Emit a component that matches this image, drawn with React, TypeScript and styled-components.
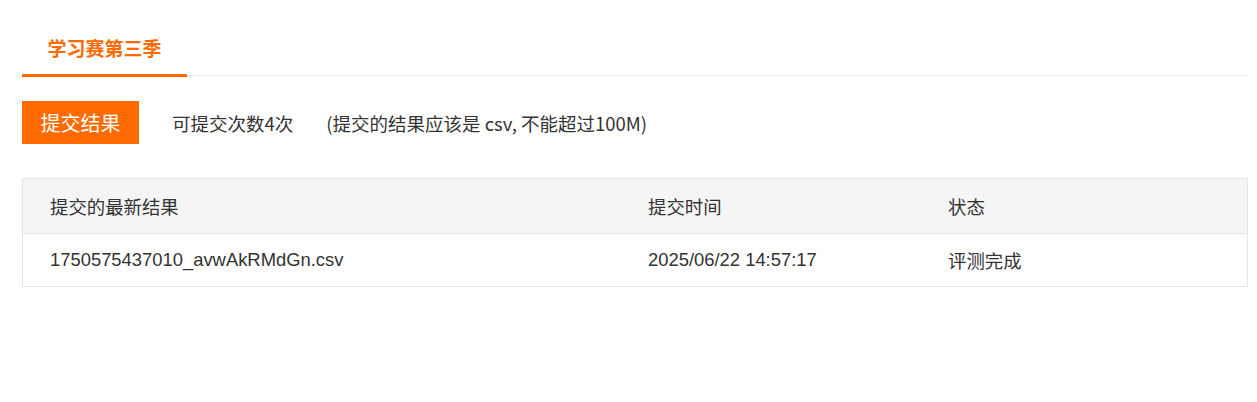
import React from "react";
import styled, { createGlobalStyle } from "styled-components";

const GlobalStyle = createGlobalStyle`
  html, body { margin: 0; padding: 0; background: #fff; }
  body { font-family: "Noto Sans CJK SC", "Noto Sans", sans-serif; color: #333; }
`;

const Page = styled.div`
  padding: 20px 9px 0 22px;
`;

const TabBar = styled.div`
  display: flex;
  border-bottom: 1px solid #eeeeee;
`;

const Tab = styled.div<{ $active?: boolean }>`
  height: 54px;
  width: 165px;
  display: flex;
  align-items: center;
  justify-content: center;
  font-size: 19px;
  font-weight: 700;
  color: ${(p) => (p.$active ? "#ff6a00" : "#333")};
  border-bottom: 3px solid ${(p) => (p.$active ? "#ff6a00" : "transparent")};
  margin-bottom: -2px;
  box-sizing: content-box;
`;

const ActionRow = styled.div`
  display: flex;
  align-items: center;
  margin-top: 25px;
  height: 43px;
`;

const SubmitButton = styled.button`
  width: 117px;
  height: 43px;
  border: none;
  background: #ff6a00;
  color: #fff;
  font-family: "Noto Sans CJK SC", sans-serif;
  font-size: 20px;
  padding: 0;
  cursor: pointer;
`;

const Note = styled.span<{ $gap: number }>`
  margin-left: ${(p) => p.$gap}px;
  font-size: 18.5px;
  color: #333;
`;

const Table = styled.div`
  margin-top: 34px;
  border: 1px solid #e3e6e9;
  font-family: "Liberation Sans", "Noto Sans CJK SC", Arial, sans-serif;
  font-size: 18.4px;
  color: #333;
`;

const Row = styled.div<{ $head?: boolean }>`
  display: grid;
  grid-template-columns: 598px 300px 1fr;
  height: ${(p) => (p.$head ? 54 : 52)}px;
  align-items: center;
  background: ${(p) => (p.$head ? "#f5f5f5" : "#fff")};
  border-bottom: ${(p) => (p.$head ? "1px solid #e3e6e9" : "none")};
`;

const Cell = styled.div`
  padding-left: 27px;
  white-space: nowrap;
`;

export default function App() {
  return (
    <>
      <GlobalStyle />
      <Page>
        <TabBar>
          <Tab $active>学习赛第三季</Tab>
        </TabBar>
        <ActionRow>
          <SubmitButton>提交结果</SubmitButton>
          <Note $gap={33}>可提交次数4次</Note>
          <Note $gap={33}>(提交的结果应该是 csv, 不能超过100M)</Note>
        </ActionRow>
        <Table>
          <Row $head>
            <Cell>提交的最新结果</Cell>
            <Cell>提交时间</Cell>
            <Cell>状态</Cell>
          </Row>
          <Row>
            <Cell>1750575437010_avwAkRMdGn.csv</Cell>
            <Cell>2025/06/22 14:57:17</Cell>
            <Cell>评测完成</Cell>
          </Row>
        </Table>
      </Page>
    </>
  );
}
